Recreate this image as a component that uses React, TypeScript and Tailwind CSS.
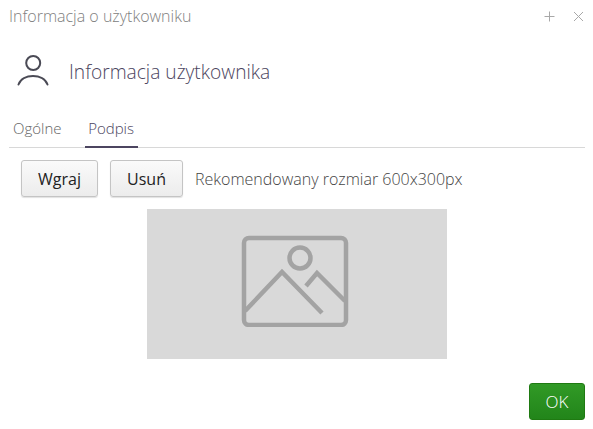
export default function App() {
  const font = { fontFamily: '"Open Sans", sans-serif' };
  return (
    <div style={font} className="w-[593px] h-[429px] bg-white overflow-hidden flex flex-col">
      <div className="h-[32px] flex items-center justify-between pl-[9px] pr-[9px]">
        <span className="text-[16px] leading-[32px] font-light text-[#808080]">Informacja o użytkowniku</span>
        <div className="flex items-center gap-[18px]">
          <svg width="11" height="11" viewBox="0 0 11 11" stroke="#a8a8a8" fill="none"><path d="M5.5 0.5v10M0.5 5.5h10" /></svg>
          <svg width="11" height="11" viewBox="0 0 11 11" stroke="#a8a8a8" fill="none"><path d="M1 1l9 9M10 1l-9 9" /></svg>
        </div>
      </div>
      <div className="h-[60px] mt-[8px] flex items-center pl-[17px] gap-[20px]">
        <svg width="32" height="32" viewBox="0 0 32 32" fill="none" stroke="#4a4a55" strokeWidth="2" strokeLinecap="round">
          <circle cx="16.2" cy="9" r="7" />
          <path d="M1.5 30.5c2-5.5 8-8.5 14.5-8.5s12.5 3 14.5 8.5" />
        </svg>
        <span className="text-[19.2px] leading-[26px] pt-[3px] font-light text-[#4c4560]">Informacja użytkownika</span>
      </div>
      <div className="ml-[9px] mr-[8px] mt-[16px] h-[32px] border-b border-[#d8d8d8] flex text-[15px] leading-[20px] font-light">
        <div className="px-[4px] pt-[2px] text-[#666]">Ogólne</div>
        <div className="ml-[19px] w-[53px] h-[32px] text-center pt-[2px] text-[#4c4560] border-b-2 border-[#4c4560]">Podpis</div>
      </div>
      <div className="mt-[12px] pl-[21px] flex items-center">
        <button className="w-[77px] h-[37px] rounded-[3px] border border-[#c4c4c4] bg-gradient-to-b from-[#fafafa] to-[#ececec] shadow-[0_1px_1px_rgba(0,0,0,0.12)] text-[16px] text-[#222]">Wgraj</button>
        <button className="ml-[12px] w-[73px] h-[37px] rounded-[3px] border border-[#c4c4c4] bg-gradient-to-b from-[#fafafa] to-[#ececec] shadow-[0_1px_1px_rgba(0,0,0,0.12)] text-[16px] text-[#222]">Usuń</button>
        <span className="ml-[12px] text-[16px] font-light text-[#444]">Rekomendowany rozmiar 600x300px</span>
      </div>
      <div className="mt-[12px] mx-auto w-[300px] h-[150px] bg-[#d9d9d9] flex items-center justify-center pr-[4px] pb-[6px]">
        <svg width="108" height="92" viewBox="0 0 108 92" fill="none" stroke="#a3a3a3" strokeWidth="4.5">
          <rect x="3" y="3" width="102" height="87" rx="5" />
          <circle cx="59" cy="23" r="10.5" />
          <path d="M4 76l37-39 40 41" />
          <path d="M65 51l11-13 28 28" />
        </svg>
      </div>
      <div className="mt-[24px] pr-[8px] flex justify-end">
        <button className="w-[56px] h-[37px] rounded-[3px] border border-[#1f7a12] bg-gradient-to-b from-[#319a26] to-[#22851a] text-[17px] font-light text-white">OK</button>
      </div>
    </div>
  );
}
